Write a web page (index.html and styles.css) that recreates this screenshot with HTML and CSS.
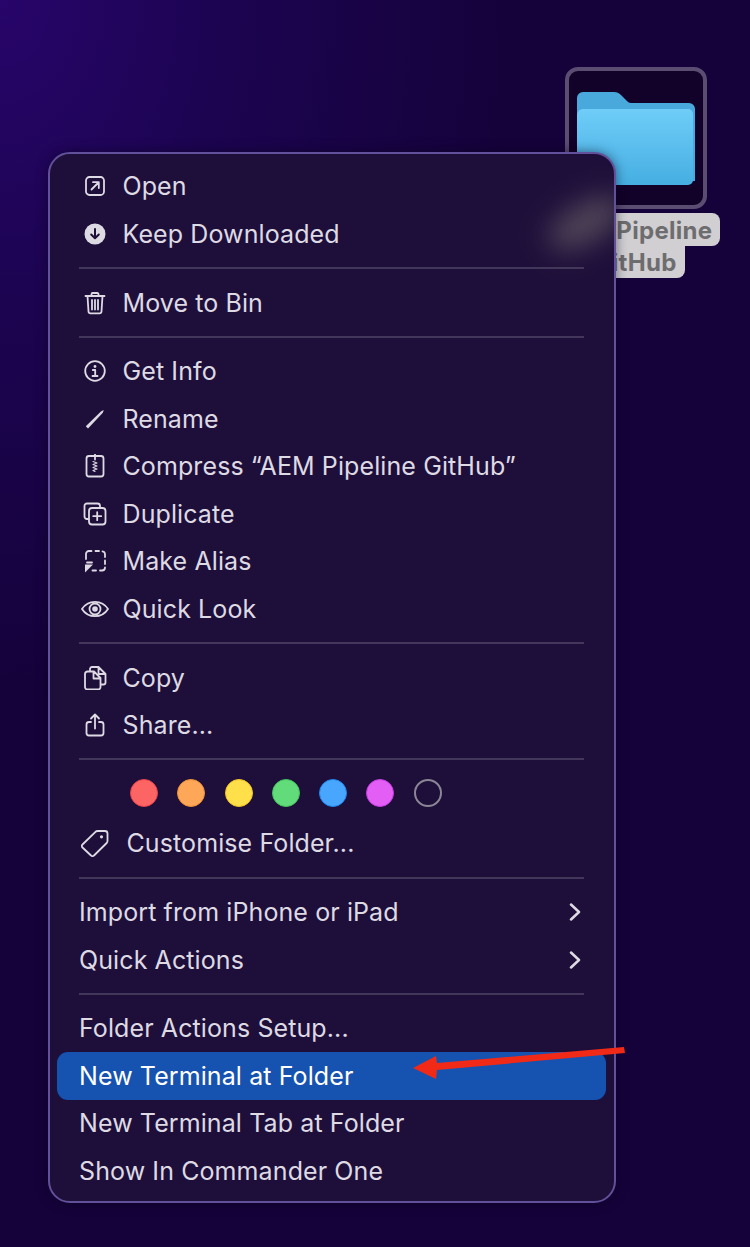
FILE: index.html
```html
<!DOCTYPE html>
<html lang="en">
<head>
<meta charset="utf-8">
<title>Folder context menu</title>
<link rel="stylesheet" href="styles.css">
</head>
<body>
<main class="desktop">
  <div class="desk-icon">
    <div class="thumb">
      <svg class="folder" width="118" height="94" viewBox="0 0 118 94">
        <defs>
          <linearGradient id="fb" x1="0" y1="0" x2="0" y2="1"><stop offset="0" stop-color="#6fcdf8"/><stop offset="1" stop-color="#46aee2"/></linearGradient>
        </defs>
        <path d="M0 7a6 6 0 0 1 6-6h31c3 0 5 1 7 3l6 6c2 2 3 2 6 2h56a6 6 0 0 1 6 6v72H0z" fill="#4aa9dc"/>
        <path d="M0 24a6 6 0 0 1 6-6h105a5 5 0 0 1 5 5v66a5 5 0 0 1-5 5H5a5 5 0 0 1-5-5z" fill="url(#fb)"/>
      </svg>
    </div>
    <div class="label">
      <span class="pill">AEM Pipeline</span>
      <span class="pill pill-b">GitHub</span>
    </div>
  </div>

  <nav class="menu">
    <div class="smudge"></div>
    <div class="row"><span class="ico"><svg width="24" height="24" viewBox="0 0 24 24"><rect x="3" y="3" width="18" height="18" rx="3.500" class="ln"/><path d="M8.500 15.500l7-7M10 8.200h5.800V14" class="ln"/></svg></span>Open</div>
    <div class="row"><span class="ico"><svg width="24" height="24" viewBox="0 0 24 24"><circle cx="12" cy="12" r="10.500" class="fl"/><path d="M12 7v9M8.200 12.500L12 16.300l3.800-3.800" class="cut"/></svg></span>Keep Downloaded</div>
    <hr class="sep">
    <div class="row"><span class="ico"><svg width="24" height="24" viewBox="0 0 24 24"><path d="M2.500 5h19M8.500 5V3.200a1.200 1.200 0 0 1 1.200-1.200h4.600a1.200 1.200 0 0 1 1.200 1.200V5M4.500 5l1 15.500a2 2 0 0 0 2 1.800h9a2 2 0 0 0 2-1.800l1-15.500M9 9v9.500M12 9v9.500M15 9v9.500" class="ln"/></svg></span>Move to Bin</div>
    <hr class="sep">
    <div class="row"><span class="ico"><svg width="24" height="24" viewBox="0 0 24 24"><circle cx="12" cy="12" r="9.800" class="ln"/><path d="M9.800 11h2.400v6M9.500 17h5" class="ln"/><circle cx="12" cy="7.500" r="1.400" class="fl"/></svg></span>Get Info</div>
    <div class="row"><span class="ico"><svg width="24" height="24" viewBox="0 0 24 24"><path d="M2.800 19.300L18.200 4.200l2.600-1.200-1 2.800L5 21.500z" class="fl"/></svg></span>Rename</div>
    <div class="row"><span class="ico"><svg width="24" height="24" viewBox="0 0 24 24"><rect x="3.500" y="2" width="17" height="20.500" rx="2.500" class="ln"/><path d="M12 .5v5" class="ln"/><path d="M10 7.500l4 1.500-4 1.500 4 1.500-4 1.500 4 1.500-4 1.500 2 1" class="ln ln-thin"/></svg></span>Compress “AEM Pipeline GitHub”</div>
    <div class="row"><span class="ico"><svg width="24" height="24" viewBox="0 0 24 24"><path d="M5.500 17H4a2.500 2.500 0 0 1-2.500-2.500V4a2.500 2.500 0 0 1 2.500-2.500h10.500A2.500 2.500 0 0 1 17 4v1.500" class="ln"/><rect x="6" y="6" width="16.500" height="16.500" rx="3" class="ln"/><path d="M14.200 10.200v8M10.200 14.200h8" class="ln"/></svg></span>Duplicate</div>
    <div class="row"><span class="ico"><svg width="24" height="24" viewBox="0 0 24 24"><path d="M3 10V5a3 3 0 0 1 3-3h2.500M12.500 2H16M19.500 2.300A3 3 0 0 1 22 5v3M22 11.500V15M22 18.500a3 3 0 0 1-3 3h-2M13 21.500h-3.500" class="ln"/><path d="M2 23.500v-8h8z" class="fl"/><path d="M4 13.500h5" class="ln"/></svg></span>Make Alias</div>
    <div class="row"><span class="ico"><svg width="28" height="24" viewBox="0 0 28 24"><path d="M1 12C4 7.200 8.500 4.800 14 4.800S24 7.200 27 12c-3 4.800-7.500 7.200-13 7.200S4 16.800 1 12z" class="ln"/><circle cx="14" cy="12" r="5.500" class="ln"/><circle cx="14" cy="12" r="2.800" class="fl"/></svg></span>Quick Look</div>
    <hr class="sep">
    <div class="row"><span class="ico"><svg width="24" height="24" viewBox="0 0 24 24"><path d="M7 4.500V3A2 2 0 0 1 9 1h6.500l7 7v8.500a2 2 0 0 1-2 2H18M15.500 1v7h7" class="ln"/><path d="M4.500 5.500H11l6.500 6.500v9a2.500 2.500 0 0 1-2.500 2.500H4.500A2.500 2.500 0 0 1 2 21V8a2.500 2.500 0 0 1 2.500-2.500zM10.500 5.500v7h7" class="ln"/></svg></span>Copy</div>
    <div class="row"><span class="ico"><svg width="24" height="24" viewBox="0 0 24 24"><path d="M8 9H6a2.500 2.500 0 0 0-2.500 2.500v8.500A2.500 2.500 0 0 0 6 22.500h12a2.500 2.500 0 0 0 2.500-2.500v-8.500A2.500 2.500 0 0 0 18 9h-2M12 15.500V1.500M8 5.500l4-4 4 4" class="ln"/></svg></span>Share...</div>
    <hr class="sep">
    <div class="tags">
      <span class="tag tag-red"></span>
      <span class="tag tag-orange"></span>
      <span class="tag tag-yellow"></span>
      <span class="tag tag-green"></span>
      <span class="tag tag-blue"></span>
      <span class="tag tag-purple"></span>
      <span class="tag tag-none"></span>
    </div>
    <div class="row row-custom"><span class="ico"><svg width="30" height="28" viewBox="0 0 30 28"><path d="M2.500 15.500L15.500 2.800c.6-.5 1.200-.8 2-.8H25a2.500 2.500 0 0 1 2.500 2.500v7.500c0 .8-.3 1.400-.8 2L14 26.500a2 2 0 0 1-3 0L2.500 18.500a2 2 0 0 1 0-3z" class="ln"/><circle cx="21.500" cy="7.800" r="1.600" class="fl"/></svg></span>Customise Folder...</div>
    <hr class="sep">
    <div class="row row-plain">Import from iPhone or iPad<svg class="chev" width="12" height="18" viewBox="0 0 12 18"><path d="M2 1.500L10 9l-8 7.500" class="ln ln-thick"/></svg></div>
    <div class="row row-plain">Quick Actions<svg class="chev" width="12" height="18" viewBox="0 0 12 18"><path d="M2 1.500L10 9l-8 7.500" class="ln ln-thick"/></svg></div>
    <hr class="sep">
    <div class="row row-plain">Folder Actions Setup...</div>
    <div class="row row-plain row-active">New Terminal at Folder</div>
    <div class="row row-plain">New Terminal Tab at Folder</div>
    <div class="row row-plain">Show In Commander One</div>
  </nav>

  <svg class="arrow" width="214" height="36" viewBox="0 0 214 36">
    <path d="M1 22L24 10l1 7L212 1l1 6L25 24l-1 9z" fill="#f02a17"/>
  </svg>
</main>
</body>
</html>
```
FILE: styles.css
```css
* { box-sizing: border-box; }
html, body { margin: 0; padding: 0; }
body { width: 750px; height: 1247px; overflow: hidden; background: #15023a; }

.desktop {
  position: relative;
  width: 750px;
  height: 1247px;
  overflow: hidden;
  font-family: Inter, "Liberation Sans", sans-serif;
  background:
    radial-gradient(ellipse 520px 700px at 0 0, #27056a 0%, #1c0450 45%, rgba(21,2,58,0) 100%),
    #15023a;
}

.desk-icon {
  position: absolute;
  left: 536px;
  top: 67px;
  width: 200px;
  display: flex;
  flex-direction: column;
  align-items: center;
}
.thumb {
  width: 142px;
  height: 142px;
  border: 4px solid #5b4c72;
  border-radius: 13px;
  background: #120128;
  display: flex;
  align-items: flex-start;
  justify-content: center;
  padding-top: 20px;
}
.folder { display: block; }
.label {
  margin-top: 4px;
  margin-right: 5px;
  display: flex;
  flex-direction: column;
  align-items: center;
}
.pill {
  background: #d1cfd2;
  color: #6d6d6f;
  font-weight: 700;
  font-size: 24px;
  letter-spacing: 0.3px;
  height: 33px;
  line-height: 36px;
  padding: 0 8px;
  border-radius: 8px;
}
.pill-b { height: 32px; line-height: 33px; padding-left: 11px; border-radius: 0 0 8px 8px; }

.menu {
  position: absolute;
  left: 48px;
  top: 152px;
  width: 568px;
  height: 1051px;
  padding: 8.500px 8px 0 7px;
  border: 2px solid #63509a;
  border-radius: 22px;
  background: #1e0f3a;
  overflow: hidden;
  color: #dedae4;
  font-size: 25px;
  letter-spacing: 0.1px;
  box-shadow: 0 0 12px rgba(8,0,24,.5);
}
.smudge {
  position: absolute;
  right: -14px;
  top: 50px;
  width: 84px;
  height: 38px;
  border-radius: 50%;
  background: #504658;
  filter: blur(14px);
  transform: rotate(-30deg);
}

.row {
  position: relative;
  display: flex;
  align-items: center;
  height: 47.500px;
  padding-left: 22px;
  white-space: nowrap;
}
.row-plain { justify-content: space-between; padding-right: 25px; }
.row-custom { margin-top: 2px; }
.row-custom .ico { margin-right: 17px; }
.row-active {
  background: #1652b0;
  color: #fff;
  border-radius: 11px;
}
.ico {
  width: 30px;
  height: 30px;
  margin-left: 0.500px;
  margin-right: 13px;
  display: flex;
  align-items: center;
  justify-content: center;
  flex: none;
}
.chev { flex: none; }

.ln { fill: none; stroke: #dedae4; stroke-width: 1.800; stroke-linecap: round; stroke-linejoin: round; }
.ln-thick { stroke-width: 2.500; }
.ln-thin { stroke-width: 1.100; }
.fl { fill: #dedae4; }
.cut { fill: none; stroke: #1e0f3a; stroke-width: 2; stroke-linecap: round; stroke-linejoin: round; }

.sep {
  height: 2px;
  margin: 9.650px 22px;
  border: 0;
  background: #42365a;
}

.tags {
  display: flex;
  align-items: center;
  gap: 19.300px;
  height: 47.500px;
  padding-left: 73px;
  padding-bottom: 2px;
}
.tag { width: 28px; height: 28px; border-radius: 50%; flex: none; }
.tag-red { background: #fd6464; border: 1.500px solid #e8434a; }
.tag-orange { background: #fea759; border: 1.500px solid #ec8f34; }
.tag-yellow { background: #ffdf4a; border: 1.500px solid #f2c51f; }
.tag-green { background: #62dc7b; border: 1.500px solid #41c35a; }
.tag-blue { background: #48a6ff; border: 1.500px solid #1d86f0; }
.tag-purple { background: #e35ef5; border: 1.500px solid #c63ce0; }
.tag-none { border: 2px solid #8b8596; }

.arrow {
  position: absolute;
  left: 412px;
  top: 1046px;
}
```
